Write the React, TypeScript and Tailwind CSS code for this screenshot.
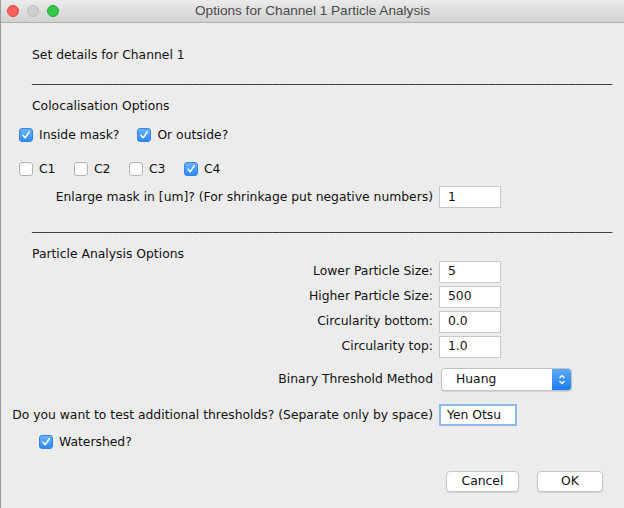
import { useState } from "react"

function Check({ checked, label }: { checked: boolean; label: string }) {
  return (
    <div className="flex items-center">
      {checked ? (
        <span className="w-[14px] h-[14px] rounded-[3px] bg-gradient-to-b from-[#6cb3fa] to-[#2c8af4] border border-[#2f86e8] flex items-center justify-center">
          <svg width="10" height="10" viewBox="0 0 10 10">
            <path d="M2 5.2 L4.2 7.8 L8.2 1.8" fill="none" stroke="white" strokeWidth="1.5" strokeLinecap="round" strokeLinejoin="round" />
          </svg>
        </span>
      ) : (
        <span className="w-[14px] h-[14px] rounded-[3px] bg-white border border-[#b4b4b4] shadow-[inset_0_1px_0_#f4f4f4]" />
      )}
      <span className="ml-[6px]">{label}</span>
    </div>
  )
}

function Field({ value, w = 62, focus = false }: { value: string; w?: number; focus?: boolean }) {
  return (
    <div
      className={
        focus
          ? "h-[22px] bg-white border-2 border-[#8fb8ec] pl-[6px] flex items-center"
          : "h-[22px] bg-white border border-[#c9c9c9] pl-[8px] flex items-center"
      }
      style={{ width: w }}
    >
      {value}
    </div>
  )
}

function Row({ label, value, first = false }: { label: string; value: string; first?: boolean }) {
  return (
    <div className={first ? "flex items-center h-[21px]" : "flex items-center h-[21px] mt-[4px]"}>
      <span className="w-[433px] text-right pr-[1px]">{label}</span>
      <span className="ml-[5px]">
        <Field value={value} />
      </span>
    </div>
  )
}

export default function App() {
  // separator drawn the ImageJ way, as a row of underscores
  const [line] = useState("_".repeat(94))

  return (
    <div className="w-[624px] h-[508px] bg-[#ececec] border-l border-[#9c9c9c] overflow-hidden text-[12.35px] text-[#111] font-['DejaVu_Sans',sans-serif] leading-none">
      {/* title bar */}
      <div className="h-[23px] bg-gradient-to-b from-[#ebebeb] to-[#d2d2d2] border-b border-[#b1b1b1] flex items-center relative">
        <div className="flex gap-[8px] pl-[6px]">
          <span className="w-[12px] h-[12px] rounded-full bg-[#fc605c] border border-[#e0443e]" />
          <span className="w-[12px] h-[12px] rounded-full bg-[#cfcfcf] border border-[#bdbdbd]" />
          <span className="w-[12px] h-[12px] rounded-full bg-[#34c84a] border border-[#1dad2b]" />
        </div>
        <div className="absolute inset-0 flex items-center justify-center text-[13.6px] text-[#4a4a4a] font-['Liberation_Sans',sans-serif]">
          Options for Channel 1 Particle Analysis
        </div>
      </div>

      <div className="pl-[31px] mt-[23px] h-[18px] flex items-center">Set details for Channel 1</div>
      <div className="pl-[31px] mt-[8px] h-[18px] whitespace-nowrap text-[#333]">{line}</div>
      <div className="pl-[31px] mt-[7px] h-[18px] flex items-center">Colocalisation Options</div>

      <div className="pl-[18px] mt-[11px] h-[18px] flex items-center gap-[18px]">
        <Check checked label="Inside mask?" />
        <Check checked label="Or outside?" />
      </div>

      <div className="pl-[18px] mt-[16px] h-[18px] flex items-center">
        <div className="w-[55px]"><Check checked={false} label="C1" /></div>
        <div className="w-[55px]"><Check checked={false} label="C2" /></div>
        <div className="w-[55px]"><Check checked={false} label="C3" /></div>
        <Check checked label="C4" />
      </div>

      <div className="flex items-center h-[22px] mt-[8px]">
        <span className="w-[433px] text-right pr-[1px]">Enlarge mask in [um]? (For shrinkage put negative numbers)</span>
        <span className="ml-[5px]">
          <Field value="1" />
        </span>
      </div>

      <div className="pl-[31px] mt-[12px] h-[18px] whitespace-nowrap text-[#333]">{line}</div>
      <div className="pl-[31px] mt-[9px] h-[14px] flex items-center">Particle Analysis Options</div>

      <Row label="Lower Particle Size:" value="5" first />
      <Row label="Higher Particle Size:" value="500" />
      <Row label="Circularity bottom:" value="0.0" />
      <Row label="Circularity top:" value="1.0" />

      <div className="flex items-center h-[23px] mt-[11px]">
        <span className="w-[433px] text-right pr-[1px]">Binary Threshold Method</span>
        <div className="ml-[7px] w-[131px] h-[23px] bg-white border border-[#c2c2c2] rounded-[4px] shadow-[0_1px_1px_rgba(0,0,0,0.12)] flex items-center overflow-hidden">
          <span className="flex-1 pl-[14px]">Huang</span>
          <span className="w-[19px] h-full bg-gradient-to-b from-[#5aa8fb] to-[#1a7cf0] flex items-center justify-center">
            <svg width="8" height="13" viewBox="0 0 8 13">
              <path d="M1.5 5 L4 2.5 L6.5 5 M1.5 8 L4 10.5 L6.5 8" fill="none" stroke="white" strokeWidth="1.3" />
            </svg>
          </span>
        </div>
      </div>

      <div className="flex items-center h-[22px] mt-[13px]">
        <span className="w-[433px] text-right pr-[1px] whitespace-nowrap">Do you want to test additional thresholds? (Separate only by space)</span>
        <span className="ml-[5px]">
          <Field value="Yen Otsu" w={78} focus />
        </span>
      </div>

      <div className="pl-[38px] mt-[7px] h-[18px] flex items-center">
        <Check checked label="Watershed?" />
      </div>

      <div className="flex justify-end gap-[18px] pr-[21px] mt-[20px]">
        <button className="w-[73px] h-[21px] bg-white border border-[#c5c5c5] rounded-[4px] shadow-[0_1px_1px_rgba(0,0,0,0.12)]">Cancel</button>
        <button className="w-[66px] h-[21px] bg-white border border-[#c5c5c5] rounded-[4px] shadow-[0_1px_1px_rgba(0,0,0,0.12)]">OK</button>
      </div>
    </div>
  )
}
